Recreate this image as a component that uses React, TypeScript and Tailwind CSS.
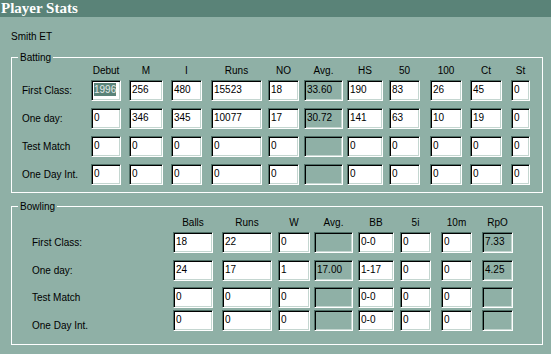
import React from 'react';

type Col = { name: string; pitch: string; width: string; readOnly?: boolean };

const battingCols: Col[] = [
    { name: 'Debut', pitch: 'w-[38px]', width: 'w-[30px]' },
    { name: 'M', pitch: 'w-[42px]', width: 'w-[34px]' },
    { name: 'I', pitch: 'w-[40px]', width: 'w-[31px]' },
    { name: 'Runs', pitch: 'w-[57px]', width: 'w-[51px]' },
    { name: 'NO', pitch: 'w-[36px]', width: 'w-[31px]' },
    { name: 'Avg.', pitch: 'w-[43px]', width: 'w-[39px]', readOnly: true },
    { name: 'HS', pitch: 'w-[42px]', width: 'w-[36px]' },
    { name: '50', pitch: 'w-[41px]', width: 'w-[31px]' },
    { name: '100', pitch: 'w-[40px]', width: 'w-[32px]' },
    { name: 'Ct', pitch: 'w-[41px]', width: 'w-[32px]' },
    { name: 'St', pitch: 'w-[19px]', width: 'w-[19px]' },
];

const bowlingCols: Col[] = [
    { name: 'Balls', pitch: 'w-[49px]', width: 'w-[40px]' },
    { name: 'Runs', pitch: 'w-[56px]', width: 'w-[50px]' },
    { name: 'W', pitch: 'w-[36px]', width: 'w-[32px]' },
    { name: 'Avg.', pitch: 'w-[44px]', width: 'w-[39px]', readOnly: true },
    { name: 'BB', pitch: 'w-[42px]', width: 'w-[36px]' },
    { name: '5i', pitch: 'w-[41px]', width: 'w-[31px]' },
    { name: '10m', pitch: 'w-[41px]', width: 'w-[31px]' },
    { name: 'RpO', pitch: 'w-[31px]', width: 'w-[31px]', readOnly: true },
];

const batting = [
    { label: 'First Class:', values: ['1996', '256', '480', '15523', '18', '33.60', '190', '83', '26', '45', '0'] },
    { label: 'One day:', values: ['0', '346', '345', '10077', '17', '30.72', '141', '63', '10', '19', '0'] },
    { label: 'Test Match', values: ['0', '0', '0', '0', '0', '', '0', '0', '0', '0', '0'] },
    { label: 'One Day Int.', values: ['0', '0', '0', '0', '0', '', '0', '0', '0', '0', '0'] },
];

const bowling = [
    { label: 'First Class:', values: ['18', '22', '0', '', '0-0', '0', '0', '7.33'], row: 'mt-[3px]', lbl: '' },
    { label: 'One day:', values: ['24', '17', '1', '17.00', '1-17', '0', '0', '4.25'], row: 'mt-[7px]', lbl: '' },
    { label: 'Test Match', values: ['0', '0', '0', '', '0-0', '0', '0', ''], row: 'mt-[6px]', lbl: '' },
    { label: 'One Day Int.', values: ['0', '0', '0', '', '0-0', '0', '0', ''], row: 'mt-[2px]', lbl: 'translate-y-[5px]' },
];

function Field({ value, col, selected }: { value: string; col: Col; selected?: boolean }) {
    return (
        <div
            className={`${col.width} h-[21px] border border-t-[#4f6f66] border-l-[#4f6f66] border-b-white border-r-white shadow-[inset_1px_1px_0_#000,inset_-1px_-1px_0_#c4d6d0] ${
                col.readOnly ? 'bg-[#8fb0a6]' : 'bg-white'
            } flex items-start overflow-hidden pl-[2px] pt-[2px]`}
        >
            {selected ? (
                <span className="bg-[#5a8378] leading-[13px] text-[#e4ebe8]">{value}</span>
            ) : (
                <span className="leading-[13px]">{value}</span>
            )}
        </div>
    );
}

function Header({ cols, labelWidth }: { cols: Col[]; labelWidth: string }) {
    return (
        <div className="flex h-[13px] leading-[13px]">
            <div className={labelWidth} />
            {cols.map((c) => (
                <div key={c.name} className={c.pitch}>
                    <div className={`${c.width} text-center`}>{c.name}</div>
                </div>
            ))}
        </div>
    );
}

export default function App() {
    return (
        <div
            className="h-[354px] w-[551px] overflow-hidden bg-[#8fb0a6] text-[10px] text-black"
            style={{ fontFamily: '"Liberation Sans", Arial, sans-serif' }}
        >
            <div className="flex h-[17px] items-center bg-[#5a8378] pl-[1px]">
                <span
                    className="text-[15px] font-bold leading-[17px] text-white"
                    style={{ fontFamily: '"Liberation Serif", "Times New Roman", serif' }}
                >
                    Player Stats
                </span>
            </div>

            <div className="pl-[11px] pt-[13px] leading-[13px]">Smith ET</div>

            <fieldset className="ml-[11px] mt-[8px] w-[532px] border border-white pb-[7px]">
                <legend className="ml-[6px] px-[2px] leading-[13px]">Batting</legend>
                <Header cols={battingCols} labelWidth="w-[79px]" />
                <div className="mt-[3px] flex flex-col gap-[7px]">
                    {batting.map((r, ri) => (
                        <div key={r.label} className="flex h-[21px] items-center">
                            <div className="w-[79px] pl-[10px] leading-[13px]">{r.label}</div>
                            {battingCols.map((c, ci) => (
                                <div key={c.name} className={c.pitch}>
                                    <Field value={r.values[ci]} col={c} selected={ri === 0 && ci === 0} />
                                </div>
                            ))}
                        </div>
                    ))}
                </div>
            </fieldset>

            <fieldset className="ml-[11px] mt-[7px] w-[532px] border border-white pb-[13px]">
                <legend className="ml-[6px] px-[2px] leading-[13px]">Bowling</legend>
                <div className="mt-[3px]">
                    <Header cols={bowlingCols} labelWidth="w-[161px]" />
                </div>
                <div className="flex flex-col">
                    {bowling.map((r) => (
                        <div key={r.label} className={`flex h-[21px] items-center ${r.row}`}>
                            <div className={`w-[161px] pl-[20px] leading-[13px] ${r.lbl}`}>{r.label}</div>
                            {bowlingCols.map((c, ci) => (
                                <div key={c.name} className={c.pitch}>
                                    <Field value={r.values[ci]} col={c} />
                                </div>
                            ))}
                        </div>
                    ))}
                </div>
            </fieldset>
        </div>
    );
}
